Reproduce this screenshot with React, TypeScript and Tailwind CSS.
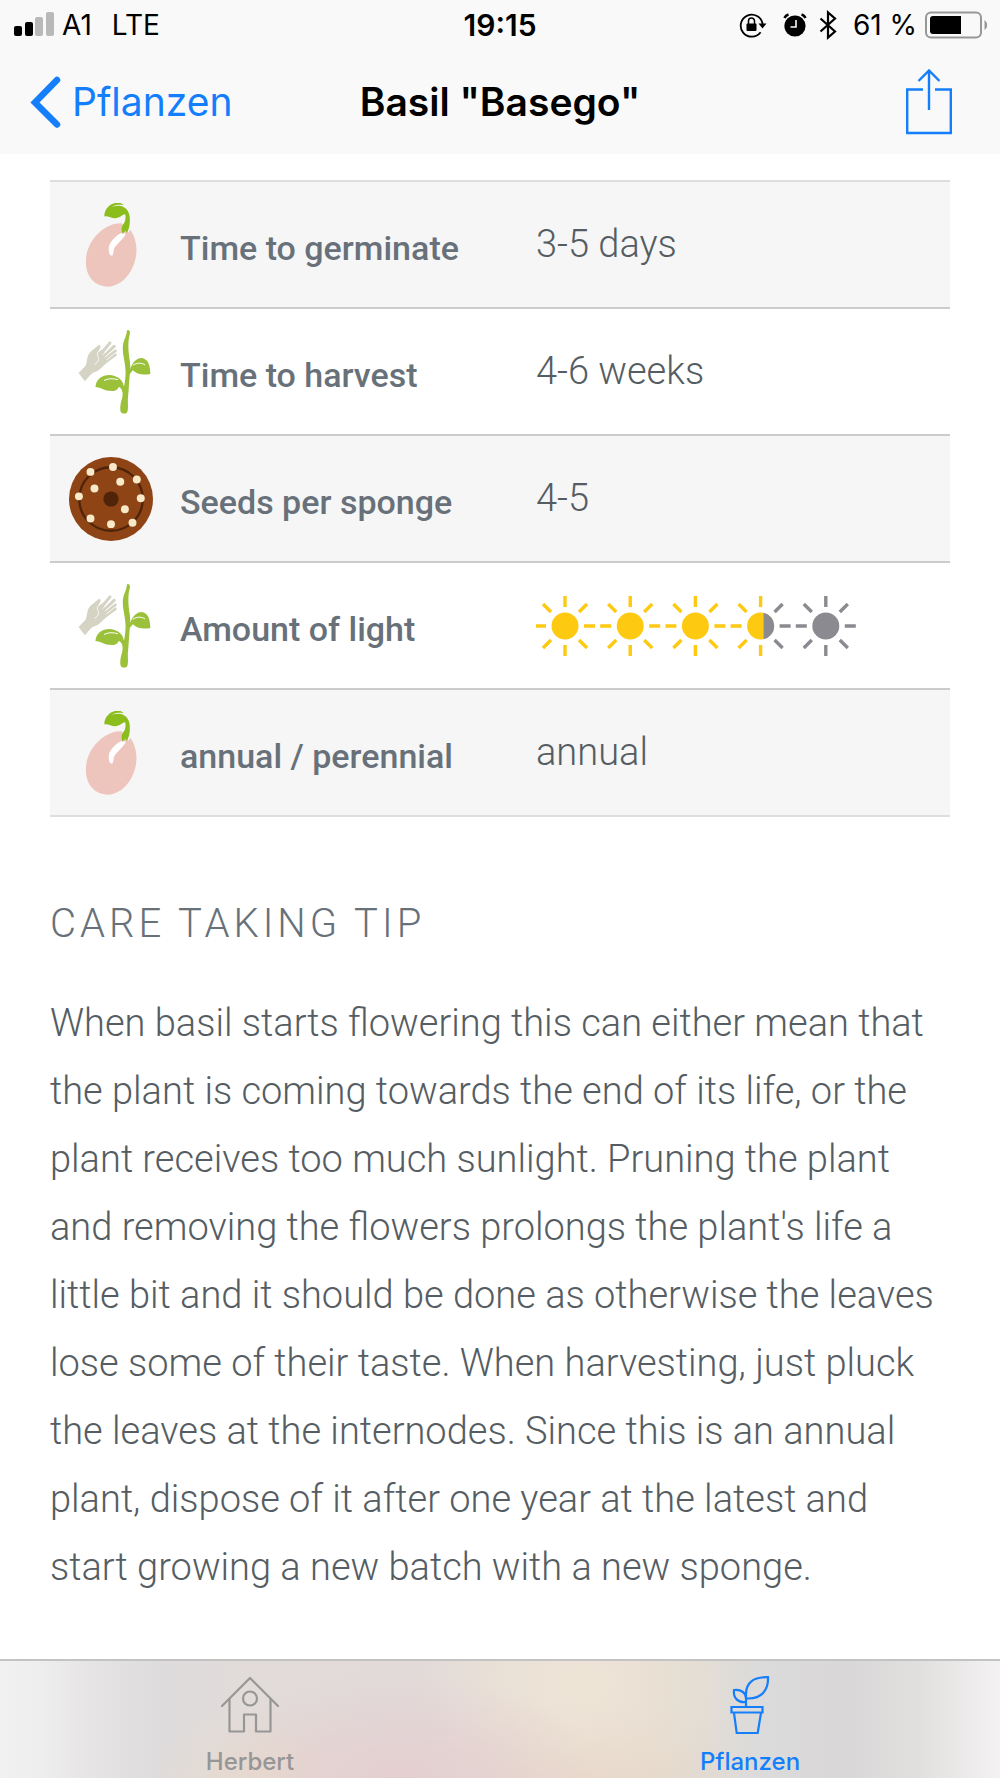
import type { ReactNode } from 'react'

const seeds = [
  [152, 124], [220, 109], [292, 147], [242, 154], [164, 174], [117, 198],
  [304, 204], [256, 237], [152, 265], [214, 282], [279, 278],
]

function SeedIcon() {
  return (
    <svg viewBox="87 97 254 254" className="size-[84px]" aria-hidden="true">
      <path
        fill="#edc5bd"
        d="M246 158C200 155 138 205 138 275c0 45 27 75 67 75 50-2 88-60 86-115-1-19-6-36-13-48l-6-9-5 9z"
      />
      <path fill="#fff" d="M246 188c-18 7-39 30-39 47 0 8 2 21 9 21 5 0 5-9 6-16 4-19 25-26 37-50z" />
      <path
        fill="#8bbd1c"
        d="M194 132c3-20 19-36 41-36 8 0 14 3 17 8-13-3-25-1-35 4 14-4 30-4 38 3 11 6 16 20 16 35 0 20-3 30-9 41l-5-6-8 9c-5-13-4-21 3-30 6-8 7-20 5-29-9 0-16 13-33 12-14-1-19-8-30-5z"
      />
    </svg>
  )
}

function PlantIcon() {
  return (
    <svg viewBox="87 478 254 254" className="size-[84px]" aria-hidden="true">
      <path
        fill="#d5d3c4"
        d="M116 608l21-22c6-12 2-29 16-43l24-20c7 0 7 6 2 13l-3 9 11-9 22 32c-14 12-27 33-43 37-13 4-17 13-31 28z"
      />
      <g stroke="#d5d3c4" strokeWidth="9" strokeLinecap="round">
        <path d="M181 553l30-36" />
        <path d="M188 561l36-34" />
        <path d="M192 570l35-29" />
        <path d="M190 580l37-27" />
      </g>
      <g fill="none" stroke="#fff" strokeWidth="2.5" strokeLinecap="round">
        <path d="M178 541c-11 9-1 17-2 26-1 8-5 11-11 14" />
        <path d="M190 552l27-28M196 560l29-25M201 568l25-20" />
      </g>
      <g fill="#9bc03a">
        <path d="M262 480c4-5 11 1 9 9-7 25-5 54 0 83l2 26c-4 20-4 48-7 77-3 21 2 39-3 51-3 7-16 6-20-1-3-15 1-29 5-42 3-29 11-50 10-82-1-29-10-49-8-75 2-20 11-27 12-46z" />
        <path d="M270 603c6-23 19-40 37-40 17 3 25 16 26 48-23 4-42 1-53-11l-11 13z" />
        <path d="M167 650c2-23 20-36 42-36 23 2 39 12 43 31l6 20-7 13c-2-17-7-28-14-28-4 13-18 13-31 12-15-2-22-11-39-12z" />
      </g>
      <g fill="none" stroke="#fff" strokeWidth="3" strokeLinecap="round">
        <path d="M281 584c13-8 25-7 35-1" />
        <path d="M194 630c13-6 27-6 40-2" />
      </g>
    </svg>
  )
}

function SpongeIcon() {
  return (
    <svg viewBox="87 79 254 254" className="size-[84px]" aria-hidden="true">
      <circle cx="214" cy="206" r="127" fill="#8f4415" />
      <circle cx="214" cy="206" r="96" fill="none" stroke="#4f2409" strokeWidth="7" />
      <circle cx="214" cy="206" r="23" fill="#4f2409" />
      {seeds.map(([x, y]) => (
        <circle key={`${x}-${y}`} cx={x} cy={y} r="12" fill="#f8e9c8" />
      ))}
    </svg>
  )
}

const leftRays = 'M-30 0h11M-22-22l8 8M-22 22l8-8'
const middleRays = 'M0-30v11M0 19v11'
const rightRays = 'M19 0h11M14-14l8-8M14 14l8 8'

function LightRating({ value }: { value: number }) {
  return (
    <svg viewBox="1 0 326 62" className="h-[62px] w-[326px]" role="img" aria-label={`${value} / 5`}>
      {[0, 1, 2, 3, 4].map((i) => {
        const left = value > i ? '#fdc911' : '#8b8a90'
        const right = value >= i + 1 ? '#fdc911' : '#8b8a90'
        return (
          <g key={i} transform={`translate(${30 + i * 65.2} 31)`} strokeWidth="3.4">
            <path d={leftRays} stroke={left} />
            <path d={middleRays} stroke={left} />
            <path d={rightRays} stroke={right} />
            <circle r="13.5" fill={left} />
            {left !== right && <path d="M3-13.2a13.5 13.5 0 0 1 0 26.4z" fill={right} />}
          </g>
        )
      })}
    </svg>
  )
}

const facts: { icon: ReactNode; label: string; value: ReactNode }[] = [
  { icon: <SeedIcon />, label: 'Time to germinate', value: '3-5 days' },
  { icon: <PlantIcon />, label: 'Time to harvest', value: '4-6 weeks' },
  { icon: <SpongeIcon />, label: 'Seeds per sponge', value: '4-5' },
  { icon: <PlantIcon />, label: 'Amount of light', value: <LightRating value={3.5} /> },
  { icon: <SeedIcon />, label: 'annual / perennial', value: 'annual' },
]

function StatusBar() {
  return (
    <div className="grid h-[50px] grid-cols-[1fr_auto_1fr] items-center px-3 text-[28px] leading-[50px] text-black">
      <div className="flex items-center">
        <svg viewBox="-2 0 42 26" className="mr-2 h-[26px] w-[42px]" aria-hidden="true">
          <rect y="14" width="8" height="10" rx="2" />
          <rect x="11" y="10" width="8" height="14" rx="2" />
          <rect x="21" y="5" width="8" height="19" rx="2" fill="#b9b9b9" />
          <rect x="32" y="0" width="8" height="24" rx="2" fill="#b9b9b9" />
        </svg>
        <span className="mr-5">A1</span>
        <span>LTE</span>
      </div>
      <span className="text-[30px] font-semibold">19:15</span>
      <div className="flex items-center justify-end">
        <svg viewBox="0 0 28 26" className="mr-4 h-[26px] w-7" aria-hidden="true">
          <path d="M21.6 20.2A11 11 0 1 1 23.6 12" fill="none" stroke="#000" strokeWidth="1.8" />
          <path d="M19.5 11.5h8l-4 5z" />
          <rect x="7.5" y="11.5" width="10" height="7.5" rx="1" />
          <path d="M9.5 12V9a3 3 0 0 1 6 0v3" fill="none" stroke="#000" strokeWidth="1.5" />
        </svg>
        <svg viewBox="0 0 24 26" className="mr-3 h-[26px] w-6" aria-hidden="true">
          <circle cx="12" cy="14" r="10.6" />
          <path d="M1.5 6a6 6 0 0 1 4-3.5M22.5 6a6 6 0 0 0-4-3.5" fill="none" stroke="#000" strokeWidth="2.6" />
          <path d="M13 8v7H7.5" fill="none" stroke="#fafafa" strokeWidth="1.6" />
        </svg>
        <svg viewBox="0 0 18 30" className="mr-4 h-[30px] w-[18px]" aria-hidden="true">
          <path d="M1.5 8.5L16 21.5 9 27.5V2.5l7 6L1.5 21.5" fill="none" stroke="#000" strokeWidth="2.2" />
        </svg>
        <span className="mr-2">61 %</span>
        <svg viewBox="0 0 63 28" className="h-7 w-[63px]" aria-hidden="true">
          <rect x="1" y="1.5" width="55" height="25" rx="5" fill="none" stroke="#979797" strokeWidth="2" />
          <path d="M8 5h28v18H8a3 3 0 0 1-3-3V8a3 3 0 0 1 3-3z" />
          <path d="M59.5 9c3.5 2 3.5 8 0 10z" fill="#979797" />
        </svg>
      </div>
    </div>
  )
}

function NavBar() {
  return (
    <header className="grid h-[104px] grid-cols-[1fr_auto_1fr] items-center px-[30px]">
      <a href="#pflanzen" className="flex items-center gap-[10px] text-[39px] text-[#157efb]">
        <svg viewBox="0 0 32 52" className="h-[52px] w-8" aria-hidden="true">
          <path d="M27 4L5 26.5 27 48.5" fill="none" stroke="currentColor" strokeWidth="6.5" strokeLinecap="round" />
        </svg>
        Pflanzen
      </a>
      <h1 className="text-[39px] font-semibold text-black">Basil "Basego"</h1>
      <button type="button" aria-label="Teilen" className="mr-[18px] justify-self-end text-[#157efb]">
        <svg viewBox="0 0 46 66" className="h-[66px] w-[46px]" fill="none" stroke="currentColor" strokeWidth="2.4" aria-hidden="true">
          <path d="M17 20.5H1.2v43.5h43.6V20.5H29" />
          <path d="M23 41V2M12.5 12L23 1.5 33.5 12" />
        </svg>
      </button>
    </header>
  )
}

function TabBar() {
  return (
    <nav className="grid grid-cols-2 border-t-2 border-[#c4c3c4] bg-[radial-gradient(ellipse_20%_90%_at_40%_100%,#e4ced0,transparent),radial-gradient(ellipse_16%_100%_at_58%_20%,#eee4d6,transparent),radial-gradient(ellipse_16%_80%_at_58%_100%,#e7d6c8,transparent),radial-gradient(ellipse_12%_60%_at_27%_100%,#e7dbcd,transparent),linear-gradient(90deg,#f2f1f2_0%,#efeeef_4%,#e6e4e5_9%,#dedbdc_16%,#e1dbd9_24%,#e2dad9_42%,#e7ded6_55%,#e4dcd0_66%,#dcdbdb_76%,#d9d7d7_85%,#e2dfdf_92%,#f4f2f2_100%)] text-[24px] leading-7 font-medium">
      <a href="#herbert" className="flex flex-col items-center gap-3 pt-[15px] pb-[2px] text-[#979696]">
        <svg viewBox="0 0 60 60" className="size-[60px]" fill="none" stroke="currentColor" strokeWidth="2.2" strokeLinecap="round" strokeLinejoin="round" aria-hidden="true">
          <path d="M2 30L30 2l28 28" />
          <path d="M9.5 23v32.5H24V38.5h12v17h14.5V23" />
          <circle cx="30" cy="22.5" r="7" />
        </svg>
        Herbert
      </a>
      <a href="#pflanzen" aria-current="page" className="flex flex-col items-center gap-3 pt-[15px] pb-[2px] text-[#157efb]">
        <svg viewBox="0 0 60 60" className="size-[60px]" fill="none" stroke="currentColor" strokeWidth="2.2" aria-hidden="true">
          <path d="M11.5 31h31v5.5h-31z" />
          <path d="M14 37l2.7 20h21L41 37" />
          <path d="M26 31V18C26 7 33 .8 48 1.2 48.5 14 42 23 27 22.5" />
          <path d="M26 26c-8 1-13-4-12-12 7-1 12 3 12 8" />
        </svg>
        Pflanzen
      </a>
    </nav>
  )
}

export default function App() {
  return (
    <div className="flex min-h-screen flex-col bg-white font-['Inter',sans-serif]">
      <div className="bg-[#f9f9f9]">
        <StatusBar />
        <NavBar />
      </div>

      <main className="flex-1 px-[50px] pt-[26px] pb-10 font-['Roboto',sans-serif]">
        <table className="w-full table-fixed border-collapse border-y-2 border-[#dedede] text-left">
          <tbody>
            {facts.map((f) => (
              <tr key={f.label} className="h-[127px] border-b-2 border-[#cccccc] odd:bg-[#f6f6f6] last:border-[#dedede]">
                <td className="w-[130px] pl-[19px]">{f.icon}</td>
                <th scope="row" className="w-[356px] pt-[6px] text-[34px] leading-10 font-medium text-[#68717a]">
                  {f.label}
                </th>
                <td className={typeof f.value === 'string' ? 'pb-[2px] text-[38px] leading-[48px] font-light text-[#555d63]' : ''}>
                  {f.value}
                </td>
              </tr>
            ))}
          </tbody>
        </table>

        <h2 className="mt-[77px] text-[40px] leading-[60px] font-light tracking-[4px] text-[#68717a]">
          CARE TAKING TIP
        </h2>
        <p className="mt-[35px] text-[38px] leading-[68px] font-light text-[#555d63]">
          When basil starts flowering this can either mean that the plant is coming towards the end of
          its life, or the plant receives too much sunlight. Pruning the plant and removing the flowers
          prolongs the plant's life a little bit and it should be done as otherwise the leaves lose some
          of their taste. When harvesting, just pluck the leaves at the internodes. Since this is an
          annual plant, dispose of it after one year at the latest and start growing a new batch with a
          new sponge.
        </p>
      </main>

      <TabBar />
    </div>
  )
}
